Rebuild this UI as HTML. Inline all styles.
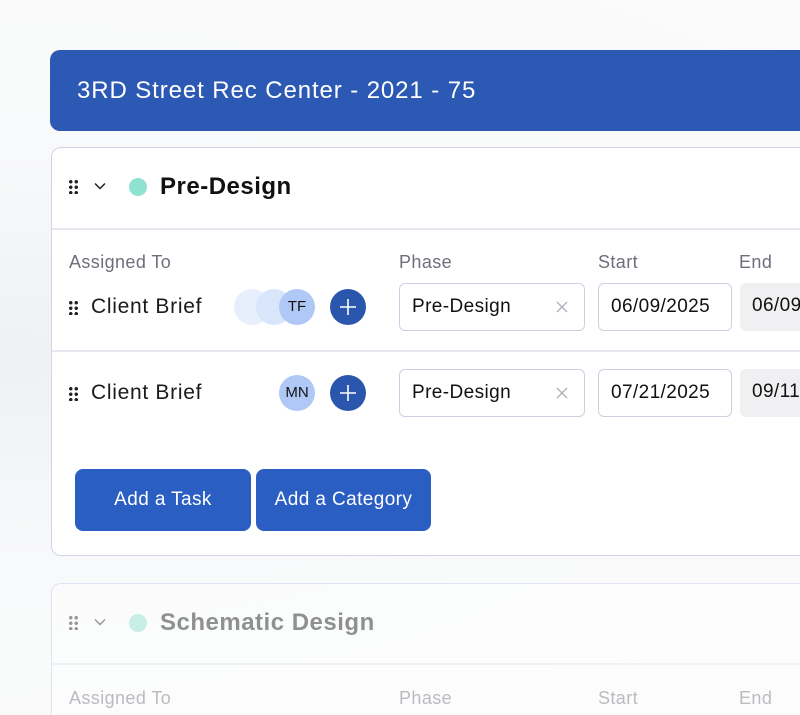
<!DOCTYPE html>
<html><head><style>
*{box-sizing:border-box;margin:0;padding:0}
html,body{width:800px;height:715px;overflow:hidden}
body{font-family:"Liberation Sans",sans-serif;background:radial-gradient(ellipse at 0% 50%,#eef0f2 0%,#f8f9fa 40%,#fbfbfb 100%);position:relative}
#w{position:absolute;left:0;top:0;width:800px;height:715px;overflow:hidden}
.a{position:absolute;white-space:nowrap}
.hdr{left:50px;top:50px;width:760px;height:81px;background:#2c59b4;border-radius:10px 0 0 10px;color:#fff;font-size:24px;letter-spacing:0.9px;padding:27px 0 0 27px}
.card{left:51px;width:760px;background:#fff;border:1.5px solid #d3d3e6;border-right:none;border-radius:10px 0 0 10px}
.dots{width:11px;height:15px;background:radial-gradient(circle,#222 1.6px,transparent 1.9px) 0 0/5.5px 5.5px}
.title{font-size:24px;font-weight:bold;color:#111;letter-spacing:0.5px}
.lbl{font-size:18px;color:#6e6e7c;letter-spacing:0.4px}
.txt{font-size:21px;color:#1a1a1a;letter-spacing:0.7px}
.inp{height:48px;border:1.5px solid #cfcfe4;border-radius:6px;background:#fff;font-size:19px;color:#111;padding:12px 0 0 12px;letter-spacing:0.4px;overflow:hidden}
.end{background:#f0f0f3;border:none;border-radius:6px 0 0 6px}
.av{width:36px;height:36px;border-radius:50%;background:#afc8f6;font-size:15px;color:#111;text-align:center;line-height:36px}
.plus{width:36px;height:36px;border-radius:50%;background:#2a56ad}
.btn{top:469px;height:62px;background:#2a5ec3;border-radius:8px;color:#fff;font-size:19px;text-align:center;line-height:62px;letter-spacing:0.4px}
</style></head><body><div id="w">
<div class="a hdr">3RD Street Rec Center - 2021 - 75</div>

<div class="a card" style="top:147px;height:409px"></div>
<div class="a" style="left:52px;top:228px;width:760px;height:1.5px;background:#e6e6ee"></div>
<div class="a dots" style="left:68px;top:179px"></div>
<svg class="a" style="left:94px;top:182px" width="12" height="8"><path d="M1 1.5L6 6.5L11 1.5" stroke="#222" stroke-width="1.5" fill="none"/></svg>
<div class="a" style="left:129px;top:178px;width:18px;height:18px;border-radius:50%;background:#8ee2cf"></div>
<div class="a title" style="left:160px;top:173px">Pre-Design</div>

<div class="a lbl" style="left:69px;top:252px">Assigned To</div>
<div class="a lbl" style="left:399px;top:252px">Phase</div>
<div class="a lbl" style="left:598px;top:252px">Start</div>
<div class="a lbl" style="left:739px;top:252px">End</div>

<div class="a dots" style="left:68px;top:300px"></div>
<div class="a txt" style="left:91px;top:295px">Client Brief</div>
<div class="a av" style="left:234px;top:289px;background:#e8effc"></div>
<div class="a av" style="left:256px;top:289px;background:#d9e5fb"></div>
<div class="a av" style="left:279px;top:289px">TF</div>
<div class="a plus" style="left:330px;top:289px"><svg width="36" height="36"><path d="M18 10V26M10 18H26" stroke="#fff" stroke-width="1.6"/></svg></div>
<div class="a inp" style="left:399px;top:283px;width:186px">Pre-Design<svg class="a" style="left:156px;top:17px" width="12" height="12"><path d="M1 1L11 11M11 1L1 11" stroke="#b0b0bc" stroke-width="1.4"/></svg></div>
<div class="a inp" style="left:598px;top:283px;width:134px">06/09/2025</div>
<div class="a inp end" style="left:740px;top:283px;width:80px">06/09/2025</div>

<div class="a" style="left:52px;top:350px;width:760px;height:1.5px;background:#e6e6ee"></div>

<div class="a dots" style="left:68px;top:386px"></div>
<div class="a txt" style="left:91px;top:381px">Client Brief</div>
<div class="a av" style="left:279px;top:375px">MN</div>
<div class="a plus" style="left:330px;top:375px"><svg width="36" height="36"><path d="M18 10V26M10 18H26" stroke="#fff" stroke-width="1.6"/></svg></div>
<div class="a inp" style="left:399px;top:369px;width:186px">Pre-Design<svg class="a" style="left:156px;top:17px" width="12" height="12"><path d="M1 1L11 11M11 1L1 11" stroke="#b0b0bc" stroke-width="1.4"/></svg></div>
<div class="a inp" style="left:598px;top:369px;width:134px">07/21/2025</div>
<div class="a inp end" style="left:740px;top:369px;width:80px">09/11/2025</div>

<div class="a btn" style="left:75px;width:176px">Add a Task</div>
<div class="a btn" style="left:256px;width:175px">Add a Category</div>

<div style="position:absolute;left:0;top:0;width:800px;height:715px;opacity:0.45">
<div class="a card" style="top:583px;height:150px;border-color:#c8c8f0"></div>
<div class="a" style="left:52px;top:663px;width:748px;height:1.5px;background:#e6e6ee"></div>
<div class="a dots" style="left:68px;top:615px"></div>
<svg class="a" style="left:94px;top:618px" width="12" height="8"><path d="M1 1.5L6 6.5L11 1.5" stroke="#222" stroke-width="1.5" fill="none"/></svg>
<div class="a" style="left:129px;top:614px;width:18px;height:18px;border-radius:50%;background:#8ee2cf"></div>
<div class="a title" style="left:160px;top:609px">Schematic Design</div>
<div class="a lbl" style="left:69px;top:688px">Assigned To</div>
<div class="a lbl" style="left:399px;top:688px">Phase</div>
<div class="a lbl" style="left:598px;top:688px">Start</div>
<div class="a lbl" style="left:739px;top:688px">End</div>
</div>
</div></body></html>
